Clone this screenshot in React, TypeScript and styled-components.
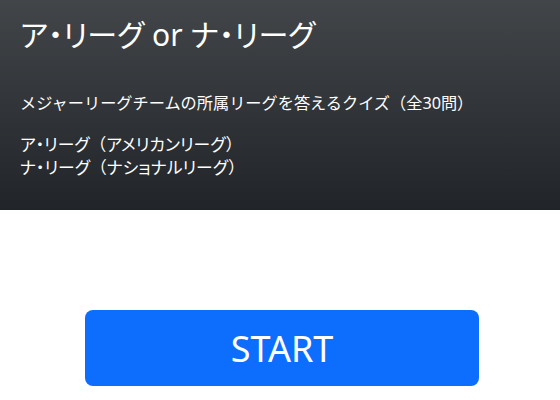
import styled, { createGlobalStyle } from "styled-components";

const GlobalStyle = createGlobalStyle`
  body {
    margin: 0;
    background: #fff;
    font-family: "Noto Sans", "Noto Sans CJK JP", sans-serif;
    color: #212529;
  }
`;

// Header with Bootstrap-like dark gradient
const Header = styled.header`
  height: 210px;
  box-sizing: border-box;
  padding: 17px 20px 0;
  background-color: #212529;
  background-image: linear-gradient(180deg, rgba(255, 255, 255, 0.15), rgba(255, 255, 255, 0));
  color: #fff;
`;

const Title = styled.h1`
  margin: 0 0 38px;
  font-size: 30px;
  font-weight: 400;
  line-height: 36px;
  font-feature-settings: "palt";
`;

const Lead = styled.p`
  margin: 0 0 18px;
  font-size: 16.2px;
  line-height: 24px;
`;

const Note = styled.p`
  margin: 0;
  font-size: 16.8px;
  line-height: 23px;
  font-feature-settings: "palt";
`;

// full-width brackets keep their space inside proportional text
const Paren = styled.span`
  font-feature-settings: normal;
`;

const Main = styled.main`
  display: flex;
  justify-content: center;
  padding: 100px 0 0 4px;
`;

const StartButton = styled.button`
  width: 394px;
  height: 76px;
  border: none;
  border-radius: 8px;
  background: #0d6efd;
  color: #fff;
  font-family: "Noto Sans", sans-serif;
  font-size: 36px;
  cursor: pointer;
`;

export default function App() {
  return (
    <>
      <GlobalStyle />
      <Header>
        <Title>ア・リーグ or ナ・リーグ</Title>
        <Lead>メジャーリーグチームの所属リーグを答えるクイズ（全30問）</Lead>
        <Note>
          ア・リーグ<Paren>（</Paren>アメリカンリーグ<Paren>）</Paren>
          <br />
          ナ・リーグ<Paren>（</Paren>ナショナルリーグ<Paren>）</Paren>
        </Note>
      </Header>
      <Main>
        <StartButton>START</StartButton>
      </Main>
    </>
  );
}
